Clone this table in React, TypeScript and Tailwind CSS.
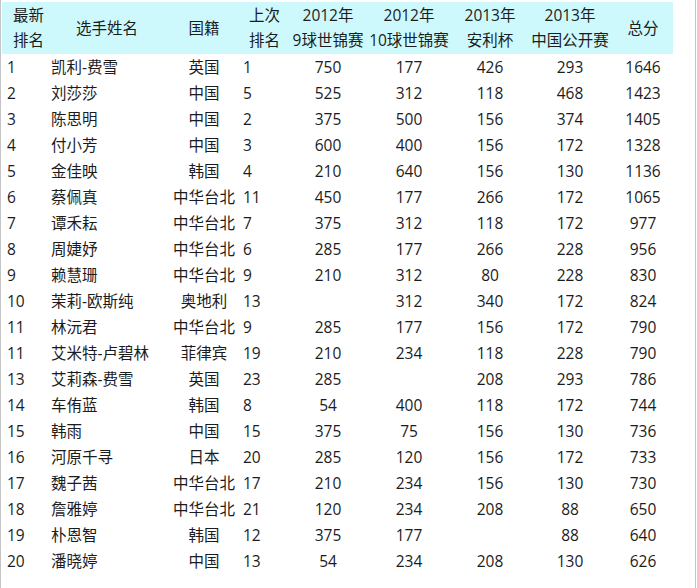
const rows: (string | number)[][] = [
  [1, '凯利-费雪', '英国', 1, 750, 177, 426, 293, 1646],
  [2, '刘莎莎', '中国', 5, 525, 312, 118, 468, 1423],
  [3, '陈思明', '中国', 2, 375, 500, 156, 374, 1405],
  [4, '付小芳', '中国', 3, 600, 400, 156, 172, 1328],
  [5, '金佳映', '韩国', 4, 210, 640, 156, 130, 1136],
  [6, '蔡佩真', '中华台北', 11, 450, 177, 266, 172, 1065],
  [7, '谭禾耘', '中华台北', 7, 375, 312, 118, 172, 977],
  [8, '周婕妤', '中华台北', 6, 285, 177, 266, 228, 956],
  [9, '赖慧珊', '中华台北', 9, 210, 312, 80, 228, 830],
  [10, '茉莉-欧斯纯', '奥地利', 13, '', 312, 340, 172, 824],
  [11, '林沅君', '中华台北', 9, 285, 177, 156, 172, 790],
  [11, '艾米特-卢碧林', '菲律宾', 19, 210, 234, 118, 228, 790],
  [13, '艾莉森-费雪', '英国', 23, 285, '', 208, 293, 786],
  [14, '车侑蓝', '韩国', 8, 54, 400, 118, 172, 744],
  [15, '韩雨', '中国', 15, 375, 75, 156, 130, 736],
  [16, '河原千寻', '日本', 20, 285, 120, 156, 172, 733],
  [17, '魏子茜', '中华台北', 17, 210, 234, 156, 130, 730],
  [18, '詹雅婷', '中华台北', 21, 120, 234, 208, 88, 650],
  [19, '朴恩智', '韩国', 12, 375, 177, '', 88, 640],
  [20, '潘晓婷', '中国', 13, 54, 234, 208, 130, 626],
];

// column widths and per-column cell classes
const cols = [
  { w: 'w-[46px]', head: 'pl-[11px] text-left', cell: 'pl-[5px] text-left' },
  { w: 'w-[122px]', head: 'pl-[28px] text-left', cell: 'pl-[3px] text-left' },
  { w: 'w-[68px]', head: 'text-center', cell: 'text-center' },
  { w: 'w-[54px]', head: 'pl-[11px] text-left', cell: 'pl-[5px] text-left' },
  { w: 'w-[72px]', head: 'text-center', cell: 'text-center' },
  { w: 'w-[90px]', head: 'text-center', cell: 'text-center' },
  { w: 'w-[72px]', head: 'text-center', cell: 'text-center' },
  { w: 'w-[88px]', head: 'text-center', cell: 'text-center' },
  { w: 'w-[58px]', head: 'text-center', cell: 'text-center' },
];

const heads = [
  ['最新', '排名'],
  ['选手姓名'],
  ['国籍'],
  ['上次', '排名'],
  ['2012年', '9球世锦赛'],
  ['2012年', '10球世锦赛'],
  ['2013年', '安利杯'],
  ['2013年', '中国公开赛'],
  ['总分'],
];

export default function App() {
  return (
    <div
      className="w-[696px] h-[588px] bg-white border-x border-[#c4c4c4] text-[#1c1c1c] text-[15.5px] pt-[2px] pl-px"
      style={{ fontFamily: '"Open Sans", "Noto Sans CJK SC", sans-serif' }}
    >
      <div className="flex w-[671px] h-[52px] bg-[#cdf9fd] leading-[25px]">
        {heads.map((h, i) => (
          <div
            key={i}
            className={`${cols[i].w} ${cols[i].head} shrink-0 flex flex-col justify-center whitespace-nowrap`}
          >
            {h.map((line) => (
              <span key={line}>{line}</span>
            ))}
          </div>
        ))}
      </div>
      {rows.map((r, ri) => (
        <div key={ri} className="flex h-[26px] items-center leading-[26px]">
          {r.map((v, ci) => (
            <div key={ci} className={`${cols[ci].w} ${cols[ci].cell} shrink-0 whitespace-nowrap`}>
              {v}
            </div>
          ))}
        </div>
      ))}
    </div>
  );
}
